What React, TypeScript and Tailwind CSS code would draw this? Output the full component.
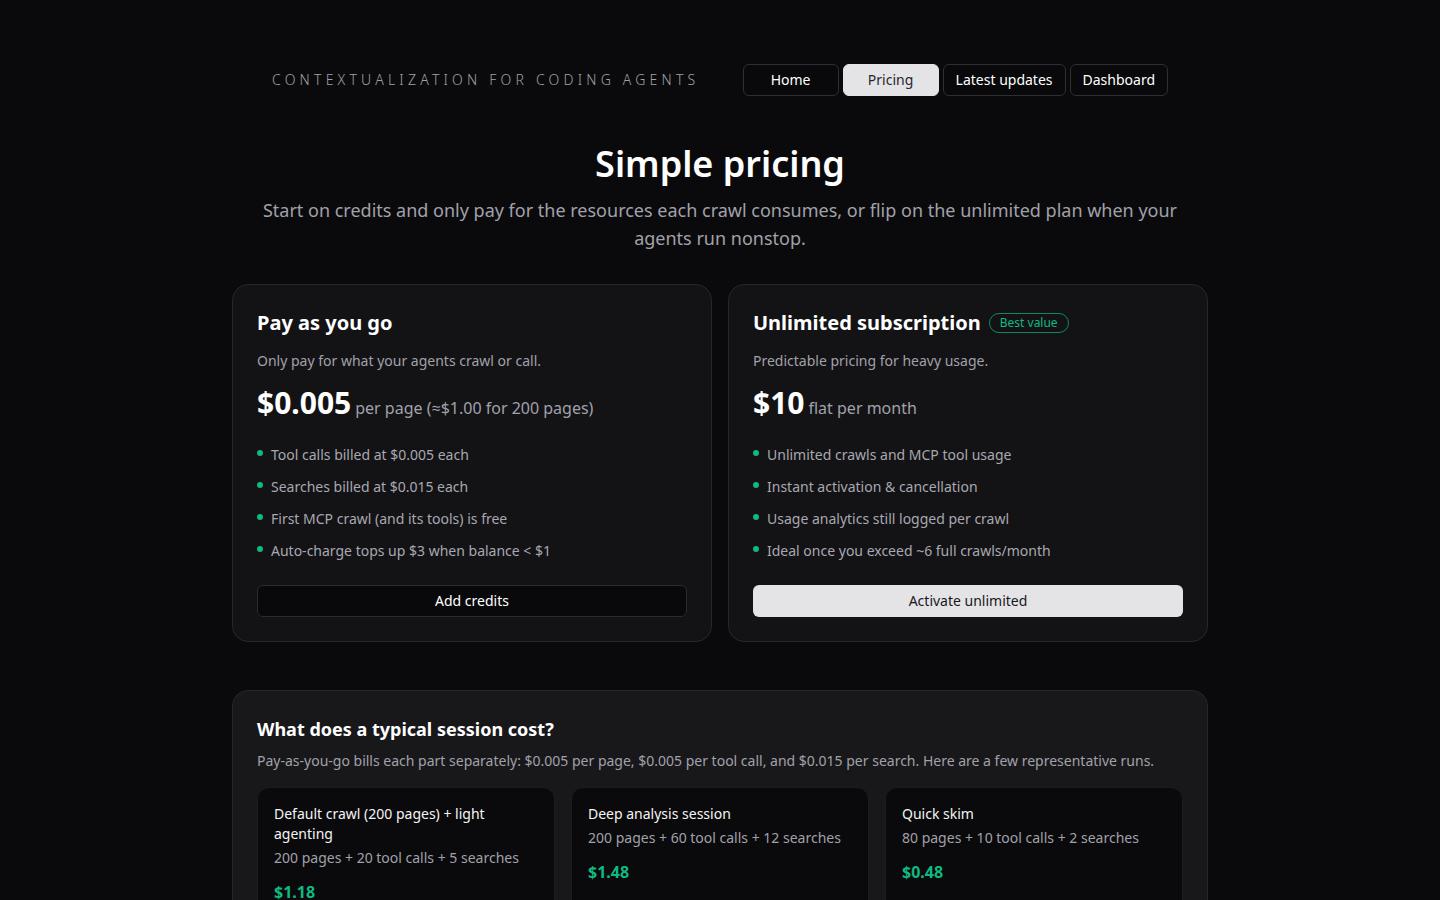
const NAV = [
  { label: "Home", active: false },
  { label: "Pricing", active: true },
  { label: "Latest updates", active: false },
  { label: "Dashboard", active: false },
]

const PLANS = [
  {
    title: "Pay as you go",
    badge: null as string | null,
    description: "Only pay for what your agents crawl or call.",
    price: "$0.005",
    unit: "per page (≈$1.00 for 200 pages)",
    features: [
      "Tool calls billed at $0.005 each",
      "Searches billed at $0.015 each",
      "First MCP crawl (and its tools) is free",
      "Auto-charge tops up $3 when balance < $1",
    ],
    cta: "Add credits",
    primary: false,
  },
  {
    title: "Unlimited subscription",
    badge: "Best value",
    description: "Predictable pricing for heavy usage.",
    price: "$10",
    unit: "flat per month",
    features: [
      "Unlimited crawls and MCP tool usage",
      "Instant activation & cancellation",
      "Usage analytics still logged per crawl",
      "Ideal once you exceed ~6 full crawls/month",
    ],
    cta: "Activate unlimited",
    primary: true,
  },
]

const SESSIONS = [
  { title: "Default crawl (200 pages) + light agenting", detail: "200 pages + 20 tool calls + 5 searches", cost: "$1.18" },
  { title: "Deep analysis session", detail: "200 pages + 60 tool calls + 12 searches", cost: "$1.48" },
  { title: "Quick skim", detail: "80 pages + 10 tool calls + 2 searches", cost: "$0.48" },
]

function PlanCard({ plan }: { plan: (typeof PLANS)[number] }) {
  return (
    <div className="rounded-2xl border border-[#26262b] bg-[#131316] p-6">
      {/* Header */}
      <div className="flex items-center gap-2">
        <h2 className="text-xl font-bold text-white">{plan.title}</h2>
        {plan.badge && (
          <span className="rounded-full border border-[#10b981]/70 px-2.5 py-px text-xs text-[#10b981]">
            {plan.badge}
          </span>
        )}
      </div>
      <p className="mt-[14px] text-sm text-[#a1a1aa]">{plan.description}</p>

      {/* Price */}
      <div className="mt-[14px] flex items-baseline gap-1">
        <span className="text-3xl font-bold text-white">{plan.price}</span>
        <span className="text-base text-[#a1a1aa]">{plan.unit}</span>
      </div>

      {/* Features */}
      <ul className="mt-6 flex flex-col gap-3">
        {plan.features.map((f) => (
          <li key={f} className="flex items-start gap-2 text-sm leading-5 text-[#a8a8b0]">
            <span className="mt-[5px] h-1.5 w-1.5 shrink-0 rounded-full bg-[#10b981]" />
            {f}
          </li>
        ))}
      </ul>

      <button
        className={
          plan.primary
            ? "mt-6 h-8 w-full rounded-md bg-[#e4e4e7] text-sm text-[#18181b]"
            : "mt-6 h-8 w-full rounded-md border border-[#2a2a2f] bg-[#09090b] text-sm text-white"
        }
      >
        {plan.cta}
      </button>
    </div>
  )
}

export default function App() {
  return (
    <div
      className="min-h-screen bg-[#0a0a0c] pb-24 text-white"
      style={{ fontFamily: '"Noto Sans", "Open Sans", sans-serif' }}
    >
      {/* Top bar */}
      <header className="mx-auto flex max-w-4xl items-center justify-between pt-16">
        <span className="text-sm font-light uppercase tracking-[0.3em] text-[#a1a1aa]">
          Contextualization for coding agents
        </span>
        <nav className="flex items-center gap-1">
          {NAV.map((n) => (
            <button
              key={n.label}
              className={
                n.active
                  ? "h-8 min-w-24 rounded-md border border-[#e4e4e7] bg-[#e4e4e7] px-3 text-sm text-[#27272a]"
                  : "h-8 min-w-24 rounded-md border border-[#2e2e33] bg-[#09090b] px-3 text-sm text-white"
              }
            >
              {n.label}
            </button>
          ))}
        </nav>
      </header>

      <main className="mx-auto max-w-[976px]">
        {/* Hero */}
        <h1 className="mt-12 text-center text-4xl font-semibold text-white">Simple pricing</h1>
        <p className="mx-auto mt-3 max-w-[930px] text-center text-lg leading-7 text-[#a1a1aa]">
          Start on credits and only pay for the resources each crawl consumes, or flip on the unlimited plan when your
          agents run nonstop.
        </p>

        {/* Plans */}
        <div className="mt-8 grid grid-cols-2 gap-4">
          {PLANS.map((p) => (
            <PlanCard key={p.title} plan={p} />
          ))}
        </div>

        {/* Typical session */}
        <section className="mt-12 rounded-2xl border border-[#26262b] bg-[#18181b] p-6">
          <h3 className="text-lg font-bold text-white">What does a typical session cost?</h3>
          <p className="mt-2 text-sm text-[#a1a1aa]">
            Pay-as-you-go bills each part separately: $0.005 per page, $0.005 per tool call, and $0.015 per search. Here
            are a few representative runs.
          </p>
          <div className="mt-4 grid grid-cols-3 gap-4">
            {SESSIONS.map((s) => (
              <div key={s.title} className="rounded-xl border border-[#1c1c20] bg-[#0a0a0c] p-4">
                <div className="text-sm leading-5 text-[#f4f4f5]">{s.title}</div>
                <div className="mt-1 text-sm text-[#a1a1aa]">{s.detail}</div>
                <div className="mt-3 text-base font-bold text-[#10b981]">{s.cost}</div>
              </div>
            ))}
          </div>
        </section>
      </main>
    </div>
  )
}
